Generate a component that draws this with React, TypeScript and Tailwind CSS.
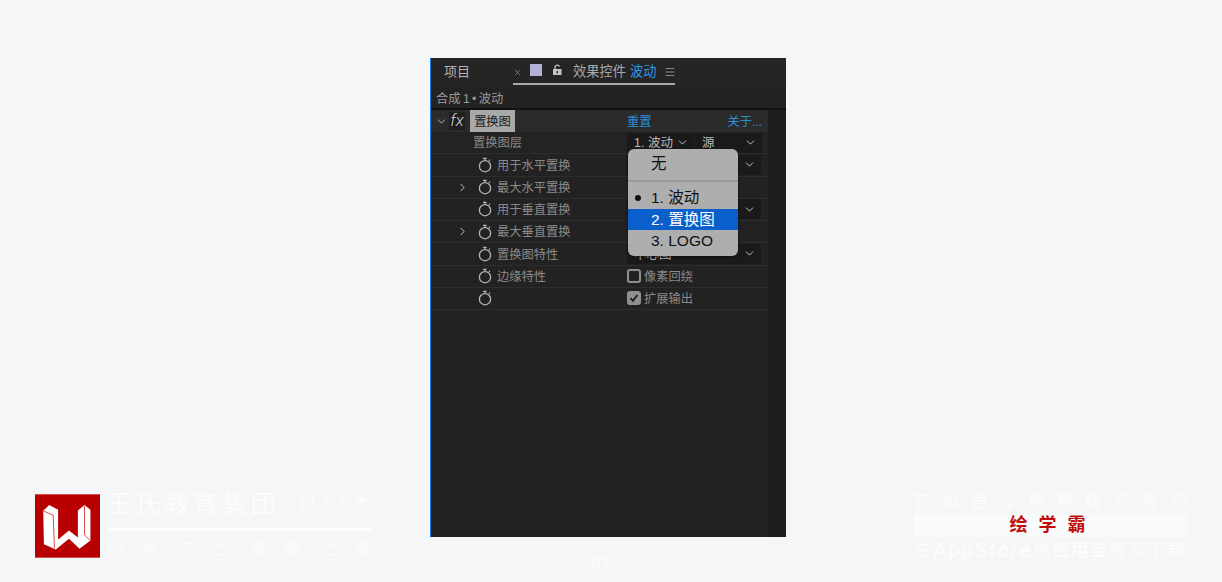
import { ChevronDown, ChevronRight, Menu, X } from "lucide-react";

const cjk = "font-['Liberation_Sans','Noto_Sans_CJK_SC',sans-serif]";

function Stopwatch() {
  return (
    <svg width="14" height="16" viewBox="0 0 14 16" fill="none" stroke="#b4b4b4" className="shrink-0">
      <circle cx="7" cy="9.2" r="5.6" strokeWidth="1.3" />
      <path d="M5 1.4 L8.6 1.4 M7 1.4 L7 3.4 M10.9 3.8 L12 2.8" strokeWidth="1.2" />
    </svg>
  );
}

function Select({ label, wide }: { label?: string; wide?: boolean }) {
  return (
    <div className={`flex h-[20px] items-center justify-between bg-[#1a1a1a] pl-[7px] pr-[5px] ${wide ? "w-[134px]" : "w-[67px]"}`}>
      <span className="pt-[2px] text-[12.5px] text-[#b8b8b8]">{label}</span>
      <ChevronDown size={13} strokeWidth={1.8} className="text-[#c8c8c8]" />
    </div>
  );
}

const rows = [
  { label: "用于水平置换", value: <Select wide label="1. 波动" /> },
  { label: "最大水平置换", arrow: true },
  { label: "用于垂直置换", value: <Select wide label="1. 波动" /> },
  { label: "最大垂直置换", arrow: true },
  { label: "置换图特性", value: <Select wide label="中心图" /> },
  { label: "边缘特性", check: "像素回绕" },
  { label: "", check: "扩展输出", checked: true },
];

function EffectRow({ row }: { row: (typeof rows)[number] }) {
  return (
    <div className="flex h-[22.25px] items-center border-b border-[#2d2d2d]">
      <div className="flex w-[196px] items-center pl-[25px]">
        <span className="flex w-[22px] justify-start">
          {row.arrow && <ChevronRight size={13} strokeWidth={1.8} className="text-[#c4c4c4]" />}
        </span>
        <Stopwatch />
        <span className="ml-[5px] pt-[2px] text-[12.25px] text-[#8a8a8a]">{row.label}</span>
      </div>
      {row.value}
      {row.check && (
        <div className="flex items-center gap-[3px]">
          <span className={`flex h-[14px] w-[14px] items-center justify-center rounded-[3px] ${row.checked ? "bg-[#8f8f8f]" : "border-2 border-[#8f8f8f]"}`}>
            {row.checked && (
              <svg width="10" height="10" viewBox="0 0 10 10" fill="none" stroke="#1c1c1c" strokeWidth="1.8">
                <path d="M1.6 5.2 L4 7.8 L8.4 2" />
              </svg>
            )}
          </span>
          <span className="pt-[2px] text-[12.25px] text-[#8a8a8a]">{row.check}</span>
        </div>
      )}
    </div>
  );
}

function Panel() {
  return (
    <div className="relative flex h-[479px] w-[356px] shrink-0 flex-col border-l border-[#1a7fe8] bg-[#222222]">
      {/* tabs */}
      <div className="flex h-[30px] items-start whitespace-nowrap bg-[#252525]">
        <span className="ml-[13px] mt-[4px] w-[69px] text-[13px] text-[#b4b4b4]">项目</span>
        <div className="flex h-[27px] w-[162px] items-center border-b-2 border-[#a9a9a9] pb-[2px]">
          <X size={9} strokeWidth={1.6} className="mt-[5px] shrink-0 text-[#a8a8a8]" />
          <span className="ml-[8px] h-[12px] w-[12px] shrink-0 bg-[#b3b0d6]" />
          <svg width="11" height="12" viewBox="0 0 11 12" className="ml-[10px] shrink-0" fill="none">
            <path d="M3 5 V3.2 A2.4 2.4 0 0 1 7.6 2.6" stroke="#c4c4c4" strokeWidth="1.3" />
            <rect x="1" y="5" width="8.5" height="6" fill="#c4c4c4" />
            <rect x="4.6" y="7" width="1.4" height="2.4" fill="#252525" />
          </svg>
          <span className="ml-[10px] pt-[4px] text-[13.25px] text-[#a8a8a8]">效果控件</span>
          <span className="ml-[4px] pt-[4px] text-[13.25px] text-[#2a9ae8]">波动</span>
          <Menu size={12} strokeWidth={1.4} className="ml-[7px] mt-[4px] shrink-0 text-[#b0b0b0]" />
        </div>
      </div>
      {/* breadcrumb */}
      <div className="flex h-[22px] items-center border-b-2 border-[#111111] pl-[5px] pt-[3px] text-[12.25px] text-[#9a9a9a] [word-spacing:-1px]">
        合成 1 • 波动
      </div>
      <div className="flex flex-1">
        <div className="w-[337px]">
          {/* effect header */}
          <div className="flex h-[22px] items-center bg-[#2b2b2b]">
            <ChevronDown size={13} strokeWidth={1.6} className="ml-[4px] text-[#c4c4c4]" />
            <span className="ml-[1px] flex h-[18px] w-[16px] items-center justify-center bg-[#1e1e1e] font-['Roboto',sans-serif] text-[17px] font-light italic text-[#cfcfcf]">
              fx
            </span>
            <span className="ml-[5px] flex h-[22px] w-[45px] items-center justify-center bg-[#a9a9a9] pt-[2px] text-[12.25px] text-[#1a1a1a]">
              置换图
            </span>
            <span className="ml-[112px] pt-[3px] text-[12.25px] text-[#2a8ed8]">重置</span>
            <span className="ml-[76px] pt-[3px] text-[12.25px] text-[#2a8ed8]">关于...</span>
          </div>
          {/* layer row */}
          <div className="flex h-[22.25px] items-center border-b border-[#2d2d2d] bg-[#232323]">
            <span className="w-[196px] pl-[42px] pt-[2px] text-[12.25px] text-[#8a8a8a]">置换图层</span>
            <Select label="1. 波动" />
            <span className="w-[1px]" />
            <Select label="源" />
          </div>
          {rows.map((row) => (
            <EffectRow key={row.check ?? row.label} row={row} />
          ))}
        </div>
        <div className="flex-1 bg-[#1d1d1d]" />
      </div>
      {/* popup menu over the selects */}
      <div className="absolute left-[197px] top-[91px] w-[110px] overflow-hidden rounded-[6px] bg-[#aeaeae] pt-[4px] text-[15.5px] text-[#111111] shadow-[0_1px_3px_rgba(0,0,0,0.5)]">
        <div className="flex h-[22px] items-center pl-[23px]">无</div>
        <div className="mt-[5px] h-[2px] bg-[#999999]" />
        <div className="mt-[5px] flex h-[22px] items-center">
          <span className="ml-[7px] mr-[10px] h-[6px] w-[6px] rounded-full bg-[#111111]" />
          1. 波动
        </div>
        <div className="flex h-[21px] items-center bg-[#0a5fca] pl-[23px] text-white">2. 置换图</div>
        <div className="flex h-[22px] items-center pl-[23px]">3. LOGO</div>
        <div className="h-[4px]" />
      </div>
    </div>
  );
}

function Logo() {
  return (
    <svg width="65" height="64" viewBox="15 15 197 192" className="shrink-0">
      <rect x="15" y="15" width="197" height="192" fill="#b90000" />
      <path
        d="M40 65 L58 47 L85 62 L85 152 L118 125 L145 146 L145 64 L165 47 L183 62 L183 155 L150 180 L118 150 L78 182 L42 166 Z"
        fill="#ffffff"
      />
      <path d="M40 65 L70 78 L74 178 M165 50 L165 138 L181 154" fill="none" stroke="#d24a4a" strokeWidth="3" />
    </svg>
  );
}

function LeftMark() {
  return (
    <div className="flex w-[430px] shrink-0 items-center self-end pb-[22px] pl-[35px]">
      <Logo />
      <div className="ml-[7px] w-[265px] text-[#fbfcfc]">
        <div className="flex h-[26px] items-center whitespace-nowrap">
          <span className="text-[25px] tracking-[3.7px]">王氏教育集团</span>
          <span className="ml-[20px] text-[17px] tracking-[1px]">以人为本</span>
        </div>
        <div className="mt-[10px] h-[3px] bg-[#fdfdfd]" />
        <div className="mt-[9px] flex justify-between text-[16px] leading-[20px]">
          {"始创于二零零二年".split("").map((c, i) => (
            <span key={i}>{c}</span>
          ))}
        </div>
      </div>
    </div>
  );
}

function RightMark() {
  return (
    <div className="ml-[128px] w-[273px] shrink-0 self-end pb-[20px] text-[#fbfcfc]">
      <div className="flex justify-between text-[17px] leading-[22px]">
        {"获得更多免费精品教程".split("").map((c, i) => (
          <span key={i}>{c}</span>
        ))}
      </div>
      <div className="flex h-[23px] items-center justify-center gap-[11px] bg-[#f9fafa] pr-[6px] text-[18px] font-bold text-[#c10d0d]">
        <span>绘</span>
        <span>学</span>
        <span>霸</span>
      </div>
      <div className="mt-[1px] flex items-center justify-between text-[17.5px] leading-[24px]">
        <span>在</span>
        <span className="font-['Roboto',sans-serif] text-[21px] font-medium tracking-[1.5px]">AppStore</span>
        <span>或</span>
        <span className="font-bold tracking-[1px]">应用宝</span>
        <span className="tracking-[2px]">搜索下载</span>
      </div>
    </div>
  );
}

export default function App() {
  return (
    <div className={`relative flex h-[582px] w-[1222px] items-start overflow-hidden bg-[#f5f6f8] pt-[58px] ${cjk}`}>
      <LeftMark />
      <Panel />
      <RightMark />
      {/* faint centre watermark */}
      <div className="absolute left-[590px] top-[556px] flex items-center gap-[5px] text-[#f9fafb]">
        <span className="flex h-[20px] w-[20px] items-center justify-center rounded-full bg-[#f8f9fa] text-[11px] font-bold text-[#f5f6f8]">
          UI
        </span>
        <span className="text-[13px]">SN</span>
      </div>
    </div>
  );
}
